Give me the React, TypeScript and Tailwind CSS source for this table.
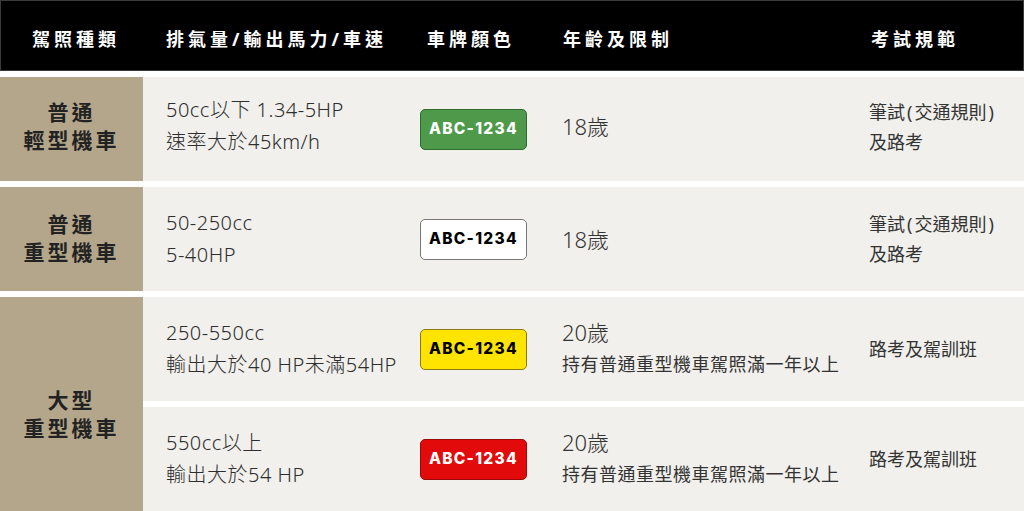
const cjk = { fontFamily: '"Noto Sans", "Noto Sans CJK TC", sans-serif' };
const plateFont = { fontFamily: 'Inter, "Liberation Sans", sans-serif' };

type Plate = { bg: string; text: string };

const Plate = ({ bg, text }: Plate) => (
  <div
    className={`flex h-[41px] w-[107px] items-center justify-center rounded-[5px] border text-[15.5px] font-extrabold tracking-[1.3px] ${bg} ${text}`}
    style={plateFont}
  >
    ABC-1234
  </div>
);

const Label = ({ top, bottom, className = "" }: { top: string; bottom: string; className?: string }) => (
  <div
    className={`flex flex-col items-center justify-center bg-[#b4a68b] text-[21px] font-bold leading-[28px] tracking-[3px] text-[#222] ${className}`}
  >
    <span>{top}</span>
    <span>{bottom}</span>
  </div>
);

const Cell = ({ children, className = "" }: { children: React.ReactNode; className?: string }) => (
  <div className={`flex flex-col justify-center bg-[#f1f0ec] ${className}`}>{children}</div>
);

const Exam = () => (
  <>
    <span>
      筆試<span className="px-[2px]">(</span>交通規則<span className="px-[2px]">)</span>
    </span>
    <span>及路考</span>
  </>
);

const spec = "pl-[23px] text-[20px] font-light leading-[32px] tracking-[0.5px] text-[#2e2e2e]";

const App = () => {
  return (
    <div className="h-[511px] w-[1024px] overflow-hidden bg-white text-[#333]" style={cjk}>
      {/* Header */}
      <div className="grid h-[71px] grid-cols-[143px_277px_142px_307px_1fr] items-center border border-[#3a3a3a] bg-black pt-[8px] text-[18px] font-bold tracking-[4px] text-white">
        <div className="pl-[7px] text-center">駕照種類</div>
        <div className="pl-[22px]">排氣量/輸出馬力/車速</div>
        <div className="pl-[6px]">車牌顏色</div>
        <div>年齡及限制</div>
        <div className="pl-[1px]">考試規範</div>
      </div>

      {/* Body */}
      <div className="mt-[6px] grid grid-cols-[143px_277px_142px_307px_1fr] grid-rows-[104px_104px_104px_104px] gap-y-[6px]">
        <Label top="普通" bottom="輕型機車" className="pb-[6px]" />
        <Cell className={`${spec} pb-[6px]`}>
          <span>50cc以下 1.34-5HP</span>
          <span>速率大於45km/h</span>
        </Cell>
        <Cell>
          <Plate bg="bg-[#4e9a4a] border-[#2f6b2c]" text="text-white" />
        </Cell>
        <Cell className="pb-[6px] text-[22px] font-light">18歲</Cell>
        <Cell className="pb-[4px] text-[18px] leading-[30px]">
          <Exam />
        </Cell>

        <Label top="普通" bottom="重型機車" className="pb-[2px]" />
        <Cell className={spec}>
          <span>50-250cc</span>
          <span>5-40HP</span>
        </Cell>
        <Cell>
          <Plate bg="bg-white border-[#777]" text="text-black" />
        </Cell>
        <Cell className="text-[22px] font-light">18歲</Cell>
        <Cell className="text-[18px] leading-[30px]">
          <Exam />
        </Cell>

        <Label top="大型" bottom="重型機車" className="row-span-2 pt-[20px]" />
        <Cell className={spec}>
          <span>250-550cc</span>
          <span>輸出大於40 HP未滿54HP</span>
        </Cell>
        <Cell>
          <Plate bg="bg-[#ffe400] border-[#8c7a10]" text="text-black" />
        </Cell>
        <Cell className="pb-[3px] leading-[32px]">
          <span className="text-[22px] font-light">20歲</span>
          <span className="text-[18px] tracking-[0.5px]">持有普通重型機車駕照滿一年以上</span>
        </Cell>
        <Cell className="text-[18px]">路考及駕訓班</Cell>

        <Cell className={spec}>
          <span>550cc以上</span>
          <span>輸出大於54 HP</span>
        </Cell>
        <Cell>
          <Plate bg="bg-[#e20a0a] border-[#9a0a0a]" text="text-white" />
        </Cell>
        <Cell className="pb-[3px] leading-[32px]">
          <span className="text-[22px] font-light">20歲</span>
          <span className="text-[18px] tracking-[0.5px]">持有普通重型機車駕照滿一年以上</span>
        </Cell>
        <Cell className="text-[18px]">路考及駕訓班</Cell>
      </div>
    </div>
  );
};

export default App;
